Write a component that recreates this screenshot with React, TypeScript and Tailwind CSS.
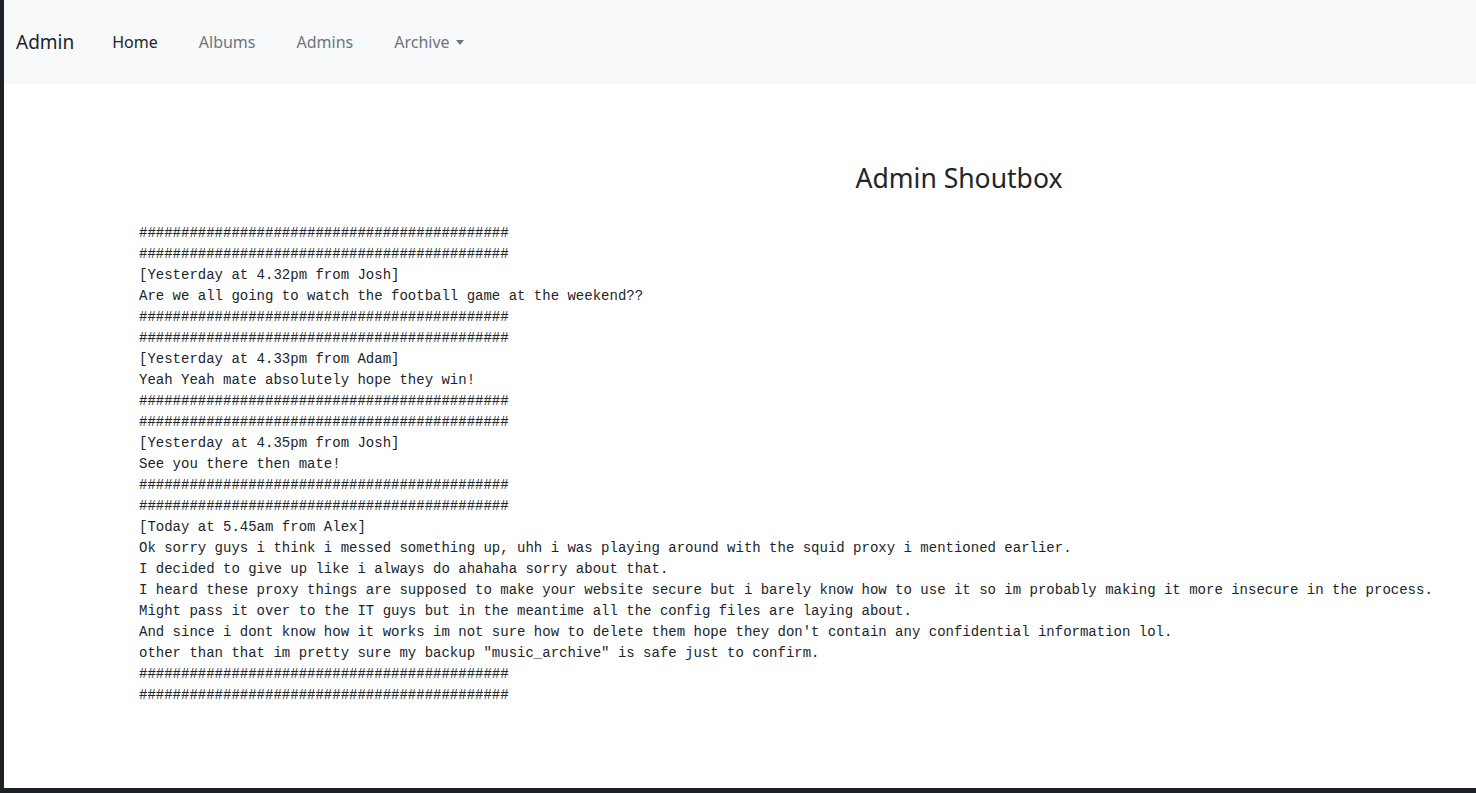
const HASH = "############################################";

const lines: string[] = [
	HASH,
	HASH,
	"[Yesterday at 4.32pm from Josh]",
	"Are we all going to watch the football game at the weekend??",
	HASH,
	HASH,
	"[Yesterday at 4.33pm from Adam]",
	"Yeah Yeah mate absolutely hope they win!",
	HASH,
	HASH,
	"[Yesterday at 4.35pm from Josh]",
	"See you there then mate!",
	HASH,
	HASH,
	"[Today at 5.45am from Alex]",
	"Ok sorry guys i think i messed something up, uhh i was playing around with the squid proxy i mentioned earlier.",
	"I decided to give up like i always do ahahaha sorry about that.",
	"I heard these proxy things are supposed to make your website secure but i barely know how to use it so im probably making it more insecure in the process.",
	"Might pass it over to the IT guys but in the meantime all the config files are laying about.",
	"And since i dont know how it works im not sure how to delete them hope they don't contain any confidential information lol.",
	'other than that im pretty sure my backup "music_archive" is safe just to confirm.',
	HASH,
	HASH,
];

const sans = "font-['Noto_Sans','Open_Sans',sans-serif]";

export default function App() {
	return (
		<div className="h-[793px] w-full bg-[#1e2027] pl-[4px] pb-[5px] overflow-hidden">
			<div className="h-[788px] bg-white overflow-hidden">
				{/* Navbar */}
				<nav
					className={`h-[84px] bg-[#f8f9fa] flex items-center pl-[12px] ${sans}`}
				>
					<span className="text-[19px] text-[#212529] mr-[38px]">Admin</span>
					<ul className="flex items-center gap-[41px] text-[16px]">
						<li className="text-[#212529]">Home</li>
						<li className="text-[#6c757d]">Albums</li>
						<li className="text-[#6c757d]">Admins</li>
						<li className="text-[#6c757d] flex items-center">
							Archive
							<span className="ml-[6px] mt-[1px] inline-block w-0 h-0 border-x-[4px] border-x-transparent border-t-[5px] border-t-[#6c757d]" />
						</li>
					</ul>
				</nav>

				{/* Shoutbox */}
				<div className="pt-[77px] pl-[135px]">
					<h3
						className={`text-[26.5px] leading-[34px] text-[#212529] text-center pl-[303px] ${sans}`}
					>
						Admin Shoutbox
					</h3>
					<pre className="mt-[28px] font-['Liberation_Mono',monospace] text-[14px] leading-[21px] text-[#212529]">
						{lines.join("\n")}
					</pre>
				</div>
			</div>
		</div>
	);
}
